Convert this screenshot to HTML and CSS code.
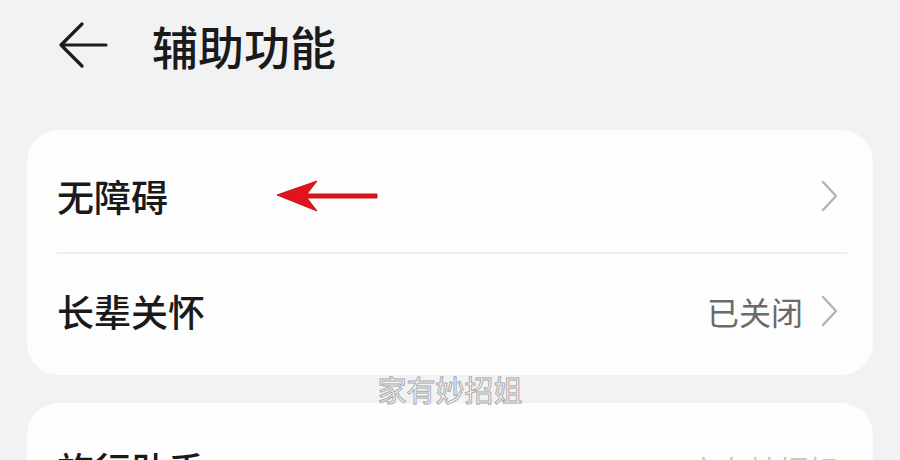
FILE: index.html
```html
<!DOCTYPE html>
<html lang="zh-CN">
<head>
  <meta charset="UTF-8">
  <title>辅助功能</title>
  <link rel="stylesheet" href="styles.css">
</head>
<body>

<div class="header">
  <svg class="back" width="50" height="48" viewBox="0 0 50 48">
    <path d="M23 3 L2 24 L23 45 M2 24 L47 24" fill="none" stroke="#1c1c1c" stroke-width="3.2" stroke-linecap="round" stroke-linejoin="round"/>
  </svg>
  <h1 class="title">辅助功能</h1>
</div>

<div class="card">
  <div class="row">
    <span class="label">无障碍</span>
    <svg class="mark" width="106" height="34" viewBox="0 0 106 34">
      <path d="M1 16 L41 2 L31 15 L101 15 L101 19 L31 19 L41 32 Z" fill="#e0141b" stroke="#c9121a" stroke-width="1" stroke-linejoin="round"/>
    </svg>
    <span class="side"></span>
    <svg class="chev" width="18" height="32" viewBox="0 0 18 32"><path d="M2 2 L15 16 L2 30" fill="none" stroke="#b3b3b3" stroke-width="2.4" stroke-linecap="round" stroke-linejoin="round"/></svg>
  </div>
  <div class="divider"></div>
  <div class="row">
    <span class="label">长辈关怀</span>
    <span class="side">已关闭</span>
    <svg class="chev" width="18" height="32" viewBox="0 0 18 32"><path d="M2 2 L15 16 L2 30" fill="none" stroke="#b3b3b3" stroke-width="2.4" stroke-linecap="round" stroke-linejoin="round"/></svg>
  </div>
</div>

<div class="watermark">家有妙招姐</div>

<div class="card card-next">
  <div class="row">
    <span class="label">旅行助手</span>
    <span class="side faint">家有妙招姐</span>
  </div>
</div>

</body>
</html>
```

FILE: styles.css
```css
body { margin: 0; height: 460px; overflow: hidden; background: #f1f2f4; font-family: "Noto Sans CJK SC", "Noto Sans", sans-serif; color: #1a1a1a; position: relative; }
.header { height: 130px; display: flex; align-items: center; padding-left: 59px; box-sizing: border-box; padding-bottom: 40px; }
.back { display: block; }
.title { margin: 0 0 0 43px; font-size: 46px; font-weight: 500; line-height: 1; }
.card { margin: 0 27px; background: #fdfdfd; border-radius: 32px; padding: 10px 0 7px; }
.card-next { margin-top: 28px; }
.row { position: relative; display: flex; align-items: center; height: 112px; padding: 0 34px 0 30px; }
.row + .divider + .row { height: 114px; }
.label { font-size: 37px; font-weight: 500; line-height: 1; }
.side { margin-left: auto; font-size: 32px; color: #6a6a6a; line-height: 1; margin-right: 18px; }
.side.faint { color: #c9c9c9; font-size: 30px; margin-right: 0; }
.chev { display: block; }
.mark { position: absolute; left: 249px; top: 39px; }
.divider { height: 2px; background: #efefef; margin: 0 26px 0 30px; }
.watermark { position: absolute; left: 0; right: 0; top: 372px; text-align: center; font-size: 29px; color: #fff; -webkit-text-stroke: 1px #a9a9a9; line-height: 1.2; }
```
